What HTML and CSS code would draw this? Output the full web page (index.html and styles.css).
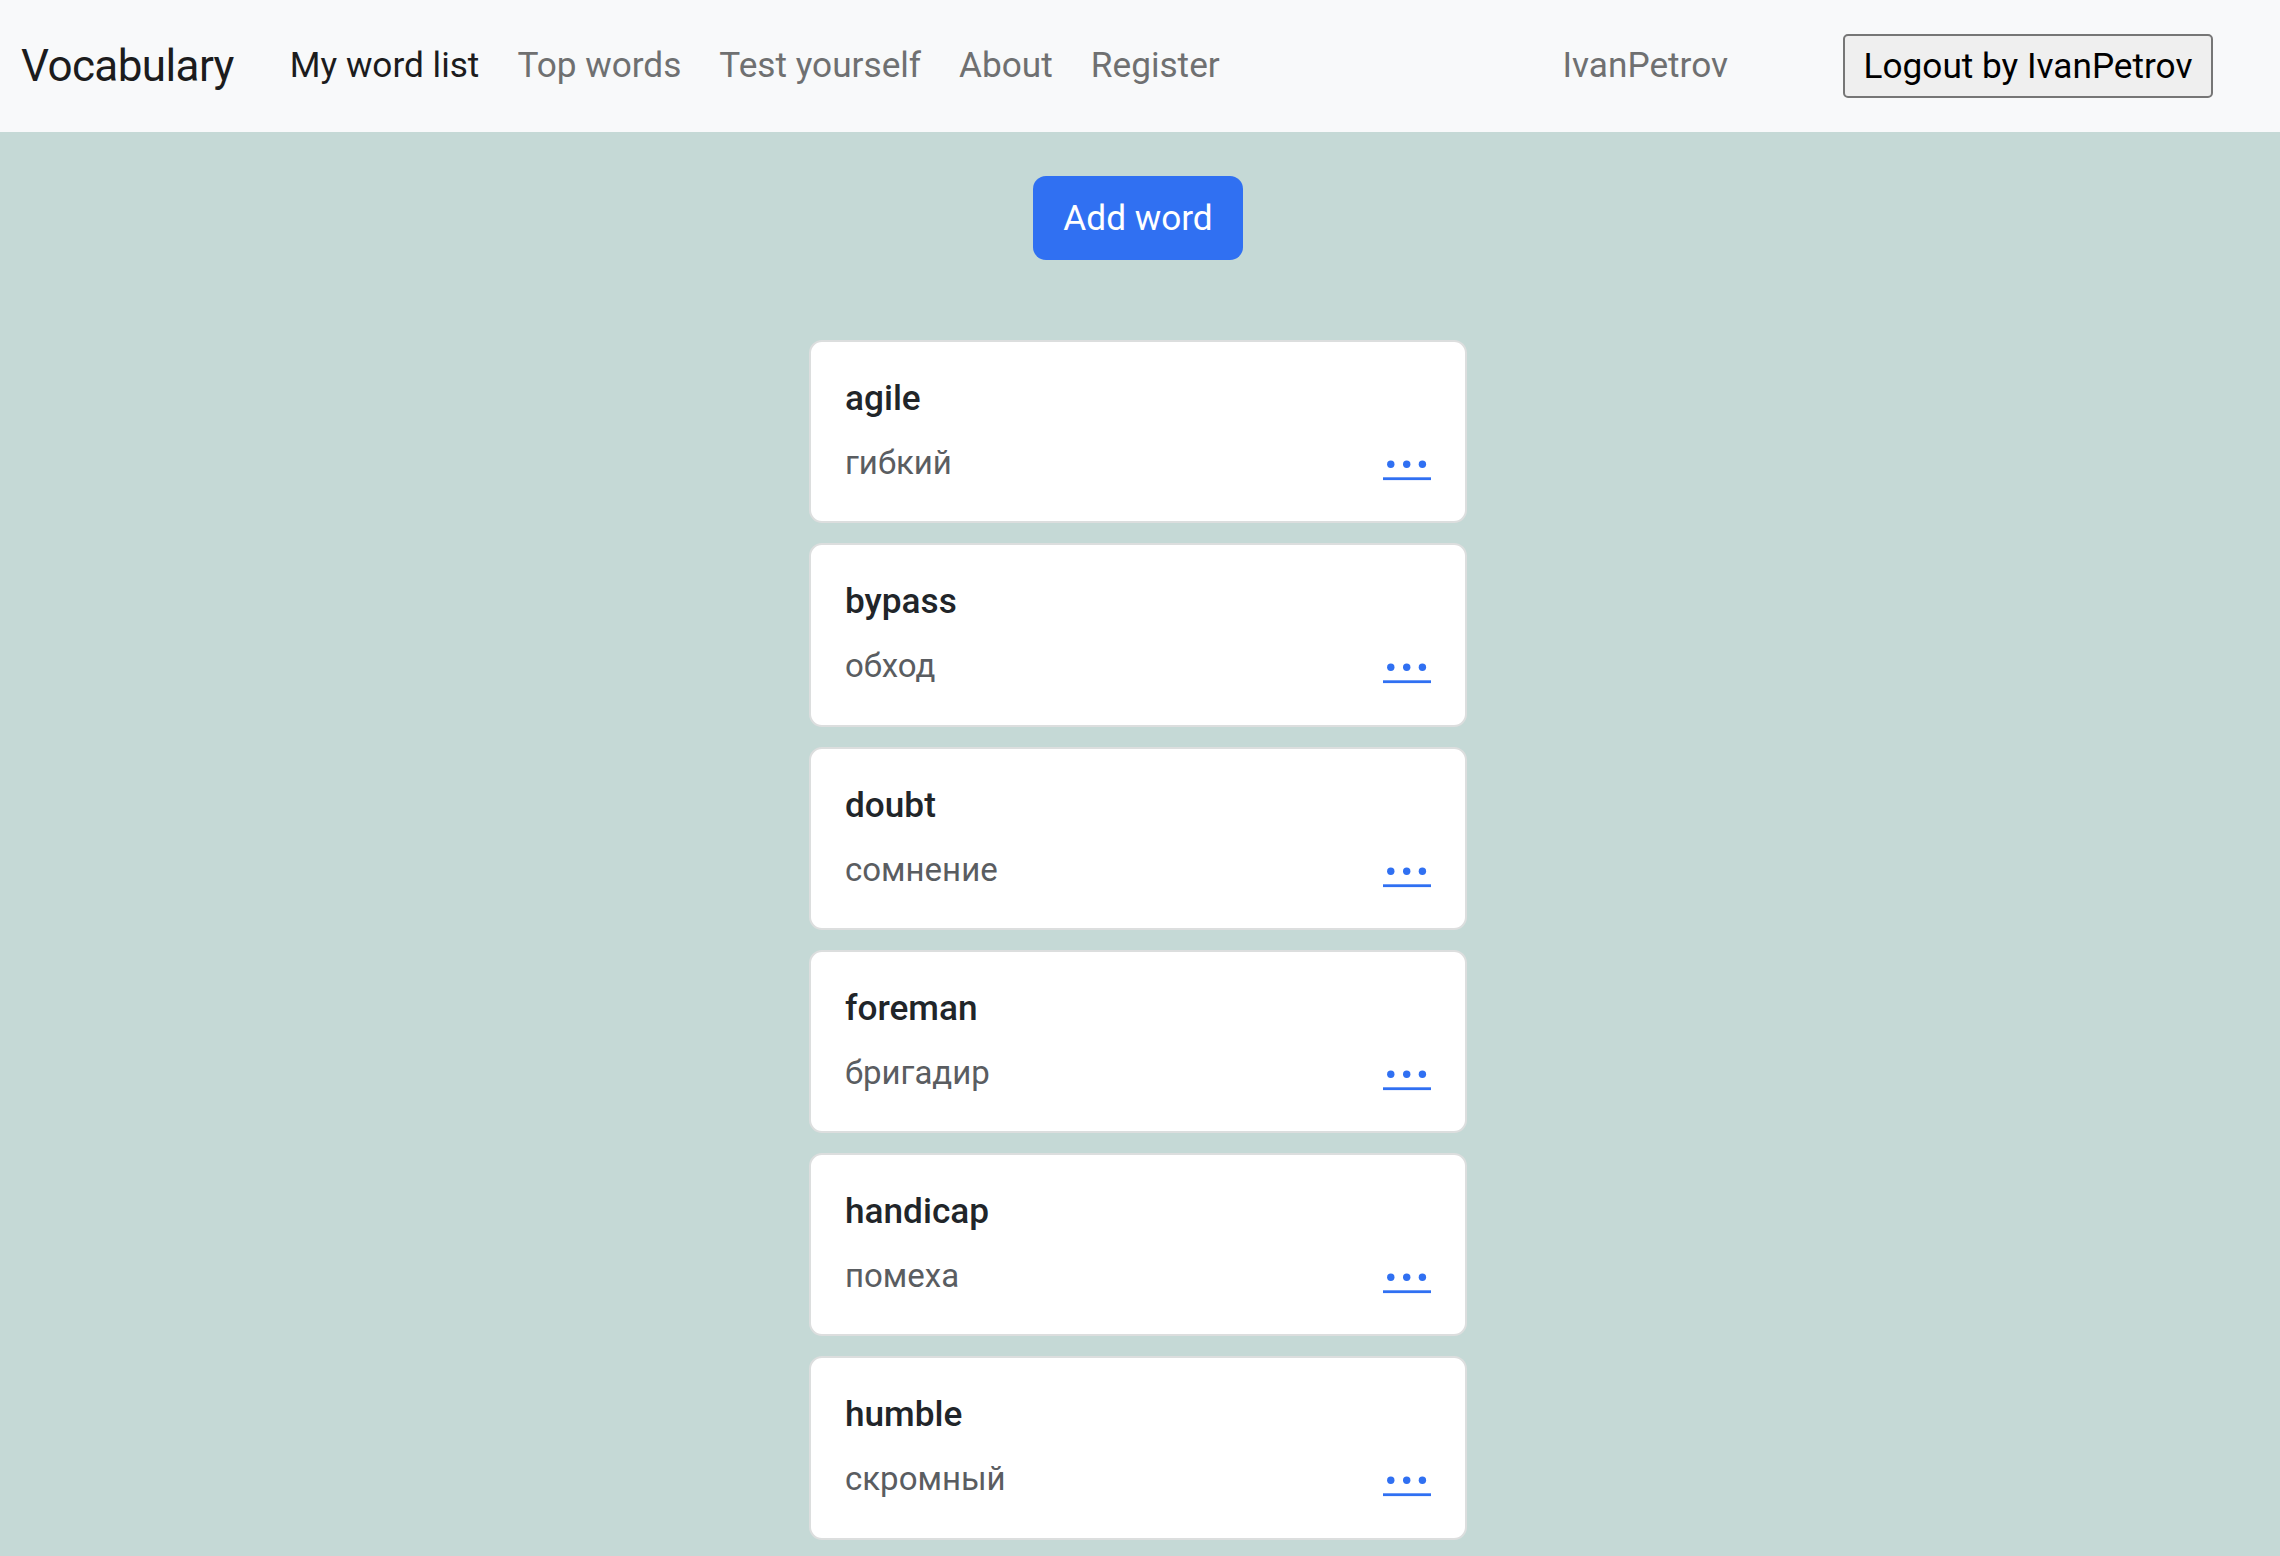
FILE: index.html
```html
<!DOCTYPE html>
<html lang="en">
<head>
<meta charset="utf-8">
<title>Vocabulary</title>
<link rel="stylesheet" href="styles.css">
</head>
<body>
<nav class="navbar">
  <a class="brand" href="#">Vocabulary</a>
  <ul class="nav-links">
    <li><a class="nav-link active" href="#">My word list</a></li>
    <li><a class="nav-link" href="#">Top words</a></li>
    <li><a class="nav-link" href="#">Test yourself</a></li>
    <li><a class="nav-link" href="#">About</a></li>
    <li><a class="nav-link" href="#">Register</a></li>
  </ul>
  <div class="nav-user">
    <span class="username">IvanPetrov</span>
    <button class="logout" type="button">Logout by IvanPetrov</button>
  </div>
</nav>
<main class="content">
  <button class="add-btn" type="button">Add word</button>
  <div class="word-list">
    <div class="card">
      <h5 class="card-title">agile</h5>
      <div class="card-row"><span class="translation">гибкий</span><a class="more" href="#"><svg width="48" height="44" viewBox="0 0 48 44"><circle cx="7.8" cy="26.3" r="3.7"/><circle cx="23.7" cy="26.3" r="3.7"/><circle cx="39.4" cy="26.3" r="3.7"/><rect x="0" y="39.3" width="48" height="2.8"/></svg></a></div>
    </div>
    <div class="card">
      <h5 class="card-title">bypass</h5>
      <div class="card-row"><span class="translation">обход</span><a class="more" href="#"><svg width="48" height="44" viewBox="0 0 48 44"><circle cx="7.8" cy="26.3" r="3.7"/><circle cx="23.7" cy="26.3" r="3.7"/><circle cx="39.4" cy="26.3" r="3.7"/><rect x="0" y="39.3" width="48" height="2.8"/></svg></a></div>
    </div>
    <div class="card">
      <h5 class="card-title">doubt</h5>
      <div class="card-row"><span class="translation">сомнение</span><a class="more" href="#"><svg width="48" height="44" viewBox="0 0 48 44"><circle cx="7.8" cy="26.3" r="3.7"/><circle cx="23.7" cy="26.3" r="3.7"/><circle cx="39.4" cy="26.3" r="3.7"/><rect x="0" y="39.3" width="48" height="2.8"/></svg></a></div>
    </div>
    <div class="card">
      <h5 class="card-title">foreman</h5>
      <div class="card-row"><span class="translation">бригадир</span><a class="more" href="#"><svg width="48" height="44" viewBox="0 0 48 44"><circle cx="7.8" cy="26.3" r="3.7"/><circle cx="23.7" cy="26.3" r="3.7"/><circle cx="39.4" cy="26.3" r="3.7"/><rect x="0" y="39.3" width="48" height="2.8"/></svg></a></div>
    </div>
    <div class="card">
      <h5 class="card-title">handicap</h5>
      <div class="card-row"><span class="translation">помеха</span><a class="more" href="#"><svg width="48" height="44" viewBox="0 0 48 44"><circle cx="7.8" cy="26.3" r="3.7"/><circle cx="23.7" cy="26.3" r="3.7"/><circle cx="39.4" cy="26.3" r="3.7"/><rect x="0" y="39.3" width="48" height="2.8"/></svg></a></div>
    </div>
    <div class="card">
      <h5 class="card-title">humble</h5>
      <div class="card-row"><span class="translation">скромный</span><a class="more" href="#"><svg width="48" height="44" viewBox="0 0 48 44"><circle cx="7.8" cy="26.3" r="3.7"/><circle cx="23.7" cy="26.3" r="3.7"/><circle cx="39.4" cy="26.3" r="3.7"/><rect x="0" y="39.3" width="48" height="2.8"/></svg></a></div>
    </div>
  </div>
</main>
</body>
</html>
```

FILE: styles.css
```css
html, body {
  margin: 0;
  padding: 0;
}

body {
  font-family: Roboto, "Liberation Sans", sans-serif;
  background: #c5d9d6;
  color: #212529;
  min-height: 1556px;
}

.navbar {
  box-sizing: border-box;
  height: 132px;
  background: #f8f9fa;
  display: flex;
  align-items: center;
  padding: 0 67px 0 21px;
}

.brand {
  font-size: 44px;
  line-height: 1;
  letter-spacing: -0.6px;
  color: #1c1c1d;
  text-decoration: none;
  margin-right: 37px;
}

.nav-links {
  list-style: none;
  margin: 0;
  padding: 0;
  display: flex;
}

.nav-link {
  display: block;
  font-size: 35.2px;
  line-height: 1;
  padding: 0 19px;
  color: #6f7071;
  text-decoration: none;
}

.nav-link.active {
  color: #1c1c1d;
}

.nav-user {
  margin-left: auto;
  display: flex;
  align-items: center;
}

.username {
  font-size: 35.2px;
  line-height: 1;
  color: #6f7071;
  margin-right: 115px;
}

.logout {
  box-sizing: border-box;
  height: 64px;
  width: 370px;
  padding: 0;
  font-family: Roboto, "Liberation Sans", sans-serif;
  font-size: 35.2px;
  color: #000;
  background: #efefef;
  border: 2px solid #767676;
  border-radius: 5px;
}

.content {
  display: flex;
  flex-direction: column;
  align-items: center;
  padding: 44px 4px 0 0;
}

.add-btn {
  width: 210px;
  height: 84px;
  padding: 0;
  font-family: Roboto, "Liberation Sans", sans-serif;
  font-size: 35.2px;
  color: #fff;
  background: #3070f2;
  border: none;
  border-radius: 13px;
  margin-bottom: 80px;
}

.word-list {
  width: 658px;
  display: flex;
  flex-direction: column;
  gap: 20px;
}

.card {
  box-sizing: border-box;
  height: 183.3px;
  background: #fff;
  border: 2px solid #dcdede;
  border-radius: 13px;
  padding: 32px 34px 0 34px;
}

.card-title {
  margin: 0 0 16px 0;
  font-size: 35.2px;
  font-weight: 500;
  line-height: 48px;
  color: #212529;
}

.card-row {
  display: flex;
  justify-content: space-between;
  align-items: flex-start;
  height: 50px;
}

.translation {
  font-size: 33px;
  line-height: 50px;
  color: #5a5d61;
}

.more {
  display: block;
  width: 48px;
  height: 44px;
  fill: #3070f2;
}

.more svg {
  display: block;
}
```
